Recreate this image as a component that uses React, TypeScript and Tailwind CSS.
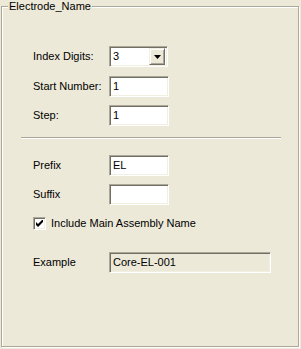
const sunken =
  "border border-t-[#aca899] border-l-[#aca899] border-b-white border-r-white shadow-[inset_1px_1px_0_#716f64,inset_-1px_-1px_0_#f1efe2]";

function Field({ value, width = "w-[60px]", disabled = false }: { value: string; width?: string; disabled?: boolean }) {
  return (
    <div
      className={`${sunken} ${width} h-[21px] flex items-center pl-[3px] ${disabled ? "bg-[#ece9d8]" : "bg-white"}`}
    >
      <span className="leading-none">{value}</span>
    </div>
  );
}

function Combo({ value }: { value: string }) {
  return (
    <div className={`${sunken} w-[59px] h-[21px] bg-white flex items-center pl-[3px] pr-[2px]`}>
      <span className="flex-1 leading-none">{value}</span>
      <div className="w-[16px] h-[17px] bg-[#ece9d8] border border-t-[#f1efe2] border-l-[#f1efe2] border-b-[#716f64] border-r-[#716f64] shadow-[inset_1px_1px_0_#fff,inset_-1px_-1px_0_#aca899] flex items-center justify-center">
        <svg width="7" height="4" viewBox="0 0 7 4">
          <path d="M0 0h7L3.5 4z" fill="#000" />
        </svg>
      </div>
    </div>
  );
}

function Row({ label, children, className = "" }: { label: string; children: React.ReactNode; className?: string }) {
  return (
    <div className={`flex items-center ${className}`}>
      <span className="w-[76px] shrink-0">{label}</span>
      {children}
    </div>
  );
}

export default function App() {
  return (
    <div
      className="w-[301px] h-[349px] bg-[#ece9d8] pt-[6px] pl-[1px] text-[11px] text-black"
      style={{ fontFamily: '"Liberation Sans", Arial, sans-serif' }}
    >
      <div className="relative w-[298px] h-[341px] border border-[#aca899] shadow-[inset_1px_1px_0_#fff,1px_1px_0_#fff]">
        <span className="absolute left-[6px] -top-[7px] bg-[#ece9d8] px-[1px] leading-[13px]">Electrode_Name</span>

        <div className="pt-[39px] pl-[31px]">
          <Row label="Index Digits:">
            <Combo value="3" />
          </Row>
          <Row label="Start Number:" className="mt-[9px]">
            <Field value="1" />
          </Row>
          <Row label="Step:" className="mt-[8px]">
            <Field value="1" />
          </Row>
        </div>

        <div className="mt-[11px] ml-[19px] w-[260px] h-[2px] border-t border-[#aca899] border-b border-b-white" />

        <div className="pt-[16px] pl-[31px]">
          <Row label="Prefix">
            <Field value="EL" />
          </Row>
          <Row label="Suffix" className="mt-[8px]">
            <Field value="" />
          </Row>
          <div className="mt-[10px] flex items-center">
            <div className={`${sunken} w-[13px] h-[13px] bg-white flex items-center justify-center`}>
              <svg width="7" height="7" viewBox="0 0 7 7">
                <path d="M0 2v3l2 2 5-5V-1L2 4z" fill="#000" />
              </svg>
            </div>
            <span className="ml-[5px]">Include Main Assembly Name</span>
          </div>
          <Row label="Example" className="mt-[20px]">
            <Field value="Core-EL-001" width="w-[162px]" disabled />
          </Row>
        </div>
      </div>
    </div>
  );
}
